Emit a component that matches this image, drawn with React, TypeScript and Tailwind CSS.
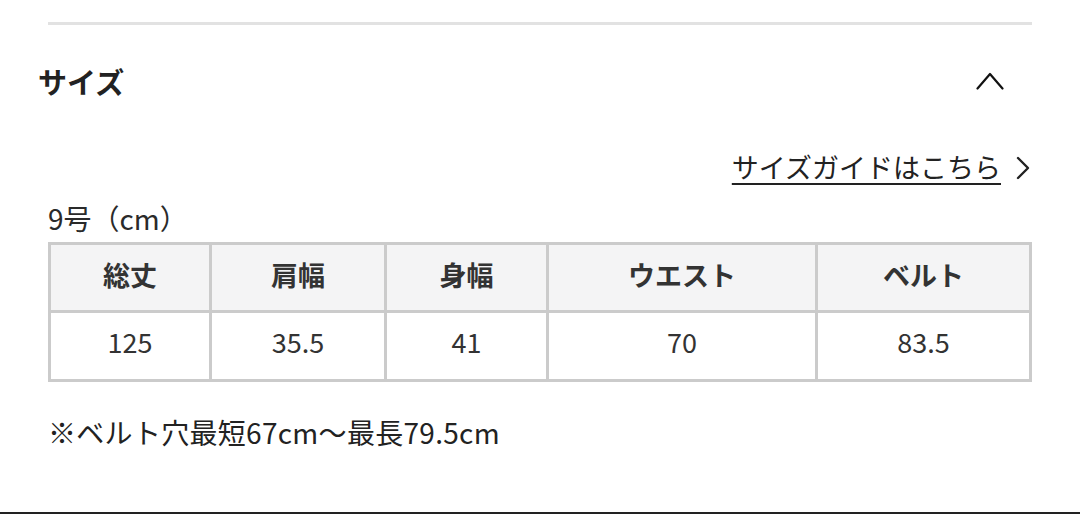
import React from 'react';

const columns = [
  { label: '総丈', value: '125', width: 'w-[161px]' },
  { label: '肩幅', value: '35.5', width: 'w-[175px]' },
  { label: '身幅', value: '41', width: 'w-[162px]' },
  { label: 'ウエスト', value: '70', width: 'w-[269px]' },
  { label: 'ベルト', value: '83.5', width: 'w-[214px]' },
];

export default function App() {
  return (
    <div className="w-[1080px] h-[514px] bg-white flex flex-col overflow-hidden text-[#222] font-['Noto_Sans_CJK_JP','Noto_Sans',sans-serif]">
      {/* 区切り線 */}
      <div className="px-12 pt-[22px]">
        <div className="h-[3px] bg-[#e2e2e2]" />
      </div>

      {/* 見出し */}
      <div className="mt-[35px] h-[42px] flex items-center justify-between pl-[38px] pr-[76px]">
        <h2 className="text-[29px] font-bold leading-none">サイズ</h2>
        <svg width="28" height="18" viewBox="0 0 28 18" fill="none">
          <path d="M1.5 16.5 L14 2 L26.5 16.5" stroke="#111" strokeWidth="2.2" strokeLinecap="round" strokeLinejoin="round" />
        </svg>
      </div>

      {/* サイズガイドリンク */}
      <div className="mt-[48px] h-[36px] flex items-center justify-end pr-[50px]">
        <a className="text-[27px] leading-none underline decoration-2 underline-offset-[5px] pb-[3px]">サイズガイドはこちら</a>
        <svg className="ml-[15px]" width="14" height="24" viewBox="0 0 14 24" fill="none">
          <path d="M2 2 L12 12 L2 22" stroke="#222" strokeWidth="2.4" strokeLinecap="round" strokeLinejoin="round" />
        </svg>
      </div>

      <div className="mt-[18px] h-[32px] flex items-center pl-12 pb-[4px] text-[28px] leading-none text-[#2a2a2a]">9号（cm）</div>

      {/* サイズ表 */}
      <div className="mt-[6px] px-12">
        <table className="w-[981px] border-collapse table-fixed text-[27px] text-[#333]">
          <thead>
            <tr>
              {columns.map((c) => (
                <th key={c.label} className={`${c.width} h-[68px] pb-[7px] border-[3px] border-[#cbcbcb] bg-[#f4f4f5] font-bold text-center leading-none`}>
                  {c.label}
                </th>
              ))}
            </tr>
          </thead>
          <tbody>
            <tr>
              {columns.map((c) => (
                <td key={c.label} className="h-[69px] pb-[9px] border-[3px] border-[#cbcbcb] text-center leading-none">
                  {c.value}
                </td>
              ))}
            </tr>
          </tbody>
        </table>
      </div>

      <div className="mt-[36px] h-[36px] flex items-center pl-12 pb-[8px] text-[28px] leading-none tracking-[0.3px]">
        ※ベルト穴最短67cm～最長79.5cm
      </div>

      <div className="mt-auto h-[2px] bg-[#222]" />
    </div>
  );
}
